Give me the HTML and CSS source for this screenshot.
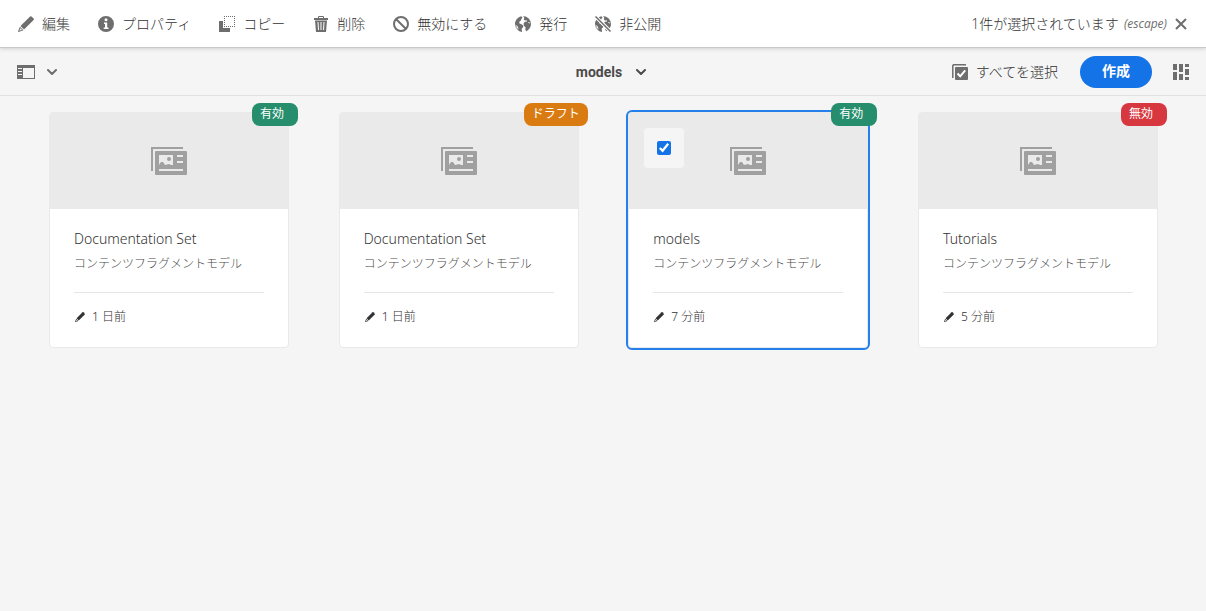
FILE: index.html
```html
<!DOCTYPE html>
<html lang="ja">
<head>
<meta charset="utf-8">
<meta name="viewport" content="width=device-width, initial-scale=1">
<title>models</title>
<link rel="stylesheet" href="styles.css">
</head>
<body>
<svg class="sprite" aria-hidden="true">
  <symbol id="edit" viewBox="0 0 16 16"><path fill="currentColor" d="M12.1.5a1 1 0 0 1 1.4 0l2.1 2.1a1 1 0 0 1 0 1.4L6 13.6 2.5 10.1z"/><path fill="currentColor" fill-rule="evenodd" d="M1.9 10.7 5.4 14.2.5 16 0 15.5zM2.5 12.2 1.3 14.8 3.9 13.7z"/></symbol>
  <symbol id="info" viewBox="0 0 16 16"><path fill="currentColor" fill-rule="evenodd" d="M8 0a8 8 0 1 0 0 16A8 8 0 0 0 8 0zm0 2.3a1.500 1.500 0 1 1 0 3 1.500 1.500 0 0 1 0-3zM6 6.500h3.200v5h1.300V13H5.700v-1.500H7V8H6z"/></symbol>
  <symbol id="copy" viewBox="0 0 16 16"><path fill="currentColor" d="M0 5h4v7h7v4H0z"/><path fill="none" stroke="currentColor" stroke-dasharray="1 1" d="M5 .5h11M5 10.500h11M5.500 0v11M15.500 0v11"/></symbol>
  <symbol id="trash" viewBox="0 0 16 16"><path fill="none" stroke="currentColor" d="M5.500 2V.5h5V2"/><path fill="currentColor" fill-rule="evenodd" d="M1 2h14v2H1zM2 4.500h12L13 16H3zM4.500 6l.5 8h1l-.5-8zM7.500 6v8h1V6zM10.500 6l-.5 8h1l.5-8z"/></symbol>
  <symbol id="ban" viewBox="0 0 16 16"><path fill="none" stroke="currentColor" stroke-width="2" d="M8 1a7 7 0 1 0 0 14A7 7 0 0 0 8 1zM3 3l10 10"/></symbol>
  <symbol id="globe" viewBox="0 0 16 16"><path fill="currentColor" d="M.4 5.600C1.300 2.800 3.500.9 6.300.2L7.600 1.700 6.200 3 6 4.500 4.500 5.500 4.200 7.200 6 8 8.300 9.500 8 11.400 6.700 12.600 7 15.900A8 8 0 0 1 0 8.500V7zM8.200 0A8 8 0 0 1 16 8c0 3.200-1.900 6-4.700 7.300L10.200 13.500 10.700 11.500 8.800 9.500 8.600 7.300 10 5.800 12 5.600 11.800 4.200 10 4.600 8.800 3.400 9.300 1.800z"/><path fill="#fff" d="m0 8.500 1.800 1 1 1.300.7 2.200-1 .7L0 11zM13 6.500l.8-.5 1.500 1-.7.6z"/><path fill="none" stroke="currentColor" stroke-width=".8" d="M.5 8a7.500 7.500 0 0 0 3 6"/></symbol>
  <symbol id="unpublish" viewBox="0 0 16 16"><use href="#globe"/><path stroke="#fff" stroke-width="3.500" d="m0 0 16 16"/><path stroke="currentColor" stroke-width="1.500" d="m.5.5 15 15"/></symbol>
  <symbol id="close" viewBox="0 0 12 12"><path fill="none" stroke="currentColor" stroke-width="2" d="m1 1 10 10M11 1 1 11"/></symbol>
  <symbol id="rail" viewBox="0 0 18 14"><path fill="currentColor" fill-rule="evenodd" d="M0 0h18v14H0zM6 3v10h11V3zM1 3v1h4V3zM1 6v1h4V6zM1 9v1h4V9z"/></symbol>
  <symbol id="chevron" viewBox="0 0 10 6"><path fill="none" stroke="currentColor" stroke-width="2" stroke-linecap="round" stroke-linejoin="round" d="m1 1 4 4 4-4"/></symbol>
  <symbol id="select-all" viewBox="0 0 16 16"><path fill="none" stroke="currentColor" stroke-width="1.500" d="M.8 14V1.500L1.500.8H14"/><path fill="currentColor" d="M4 3h11a1 1 0 0 1 1 1v11a1 1 0 0 1-1 1H4a1 1 0 0 1-1-1V4a1 1 0 0 1 1-1z"/><path fill="none" stroke="#fff" stroke-width="2" d="m5.500 9.500 2.700 2.800 5-6"/></symbol>
  <symbol id="cards" viewBox="0 0 16 16"><path fill="currentColor" d="M0 0h4v6H0zM0 8h4v8H0zM6 0h4v8H6zM6 10h4v6H6zM12 0h4v3h-4zM12 5h4v6h-4zM12 13h4v3h-4z"/></symbol>
  <symbol id="fragment" viewBox="0 0 36 28"><path fill="none" stroke="currentColor" stroke-width="2" d="M1 24V1h31"/><path fill="currentColor" fill-rule="evenodd" d="M5 4h30a1 1 0 0 1 1 1v22a1 1 0 0 1-1 1H5a1 1 0 0 1-1-1V5a1 1 0 0 1 1-1zM8 8v10l2-3h2l2 3 4-1 2 1h2V8zM26 8v2h6V8zM26 14v2h6v-2zM8 22v2h24v-2z"/><circle cx="18" cy="12" r="2" fill="currentColor"/></symbol>
</svg>

<header class="action-bar">
  <div class="actions">
    <button class="action" type="button"><svg class="icon"><use href="#edit"/></svg>編集</button>
    <button class="action" type="button"><svg class="icon"><use href="#info"/></svg>プロパティ</button>
    <button class="action" type="button"><svg class="icon"><use href="#copy"/></svg>コピー</button>
    <button class="action" type="button"><svg class="icon"><use href="#trash"/></svg>削除</button>
    <button class="action" type="button"><svg class="icon"><use href="#ban"/></svg>無効にする</button>
    <button class="action" type="button"><svg class="icon"><use href="#globe"/></svg>発行</button>
    <button class="action" type="button"><svg class="icon"><use href="#unpublish"/></svg>非公開</button>
  </div>
  <button class="selection" type="button"><span>1件が選択されています</span><span class="shortcut">(escape)</span><svg class="close-icon"><use href="#close"/></svg></button>
</header>

<nav class="toolbar">
  <div class="side">
    <button class="rail-button" type="button" aria-label="パネル"><svg class="rail-icon"><use href="#rail"/></svg><svg class="chevron"><use href="#chevron"/></svg></button>
  </div>
  <button class="crumb" type="button">models<svg class="chevron"><use href="#chevron"/></svg></button>
  <div class="side side-end">
    <button class="action" type="button"><svg class="icon"><use href="#select-all"/></svg>すべてを選択</button>
    <button class="create" type="button">作成</button>
    <button class="view-button" type="button" aria-label="カード表示"><svg class="icon"><use href="#cards"/></svg></button>
  </div>
</nav>

<main class="card-grid">
  <article class="card">
    <span class="badge badge-enabled">有効</span>
    <div class="preview"><svg class="fragment-icon"><use href="#fragment"/></svg></div>
    <div class="details">
      <h2 class="title">Documentation Set</h2>
      <p class="type">コンテンツフラグメントモデル</p>
      <p class="modified"><svg class="small-icon"><use href="#edit"/></svg>1 日前</p>
    </div>
  </article>
  <article class="card">
    <span class="badge badge-draft">ドラフト</span>
    <div class="preview"><svg class="fragment-icon"><use href="#fragment"/></svg></div>
    <div class="details">
      <h2 class="title">Documentation Set</h2>
      <p class="type">コンテンツフラグメントモデル</p>
      <p class="modified"><svg class="small-icon"><use href="#edit"/></svg>1 日前</p>
    </div>
  </article>
  <article class="card card-selected">
    <span class="badge badge-enabled">有効</span>
    <label class="picker"><input class="check" type="checkbox" aria-label="models" checked></label>
    <div class="preview"><svg class="fragment-icon"><use href="#fragment"/></svg></div>
    <div class="details">
      <h2 class="title">models</h2>
      <p class="type">コンテンツフラグメントモデル</p>
      <p class="modified"><svg class="small-icon"><use href="#edit"/></svg>7 分前</p>
    </div>
  </article>
  <article class="card">
    <span class="badge badge-disabled">無効</span>
    <div class="preview"><svg class="fragment-icon"><use href="#fragment"/></svg></div>
    <div class="details">
      <h2 class="title">Tutorials</h2>
      <p class="type">コンテンツフラグメントモデル</p>
      <p class="modified"><svg class="small-icon"><use href="#edit"/></svg>5 分前</p>
    </div>
  </article>
</main>
</body>
</html>
```
FILE: styles.css
```css
* {
  box-sizing: border-box;
}

body {
  margin: 0;
  min-height: 100vh;
  background: #f5f5f5;
  color: #323232;
  font: 300 14px/20px "Noto Sans", "Noto Sans CJK JP", sans-serif;
}

button {
  margin: 0;
  padding: 0;
  border: 0;
  background: none;
  color: inherit;
  font: inherit;
  white-space: nowrap;
}

svg {
  display: block;
  flex: none;
}

.sprite {
  position: absolute;
  width: 0;
  height: 0;
}

.icon {
  width: 16px;
  height: 16px;
  color: #6e6e6e;
}

.action-bar {
  position: relative;
  display: flex;
  justify-content: space-between;
  align-items: center;
  height: 48px;
  padding: 0 19px 0 18px;
  background: #fff;
  border-bottom: 1px solid #c8c8c8;
  box-shadow: 0 1px 4px rgba(0, 0, 0, 0.15);
}

.actions {
  display: flex;
  gap: 28px;
}

.action {
  display: flex;
  align-items: center;
  gap: 8px;
  font-family: "Open Sans", "Noto Sans CJK JP", sans-serif;
}

.selection {
  display: flex;
  align-items: center;
  gap: 5px;
  font-family: "Open Sans", "Noto Sans CJK JP", sans-serif;
}

.shortcut {
  color: #6e6e6e;
  font-size: 12px;
  font-style: italic;
  font-weight: 400;
}

.close-icon {
  width: 12px;
  height: 12px;
  margin-left: 3px;
  color: #6e6e6e;
}

.toolbar {
  display: flex;
  align-items: center;
  height: 48px;
  padding: 0 17px;
  border-bottom: 1px solid #e1e1e1;
}

.side {
  display: flex;
  align-items: center;
  flex: 1;
}

.side-end {
  justify-content: flex-end;
}

.rail-button {
  display: flex;
  align-items: center;
  gap: 12px;
  color: #6e6e6e;
}

.rail-icon {
  width: 18px;
  height: 14px;
}

.chevron {
  width: 10px;
  height: 6px;
}

.crumb {
  display: flex;
  align-items: center;
  gap: 14px;
  margin-left: 16px;
  color: #4b4b4b;
  font-family: Roboto, sans-serif;
  font-weight: 700;
}

.create {
  height: 32px;
  margin: 0 21px 0 22px;
  padding: 0 22px 2px;
  border-radius: 16px;
  background: #1473e6;
  color: #fff;
  font-family: "Open Sans", "Noto Sans CJK JP", sans-serif;
  font-weight: 700;
}

.card-grid {
  display: grid;
  grid-template-columns: repeat(auto-fit, 240px);
  justify-content: space-between;
  gap: 48px;
  padding: 16px 48px 48px 49px;
}

.card {
  position: relative;
  border: 1px solid #e9e9e9;
  border-radius: 4px;
  background: #fff;
}

.card-selected {
  outline: 2px solid #2680eb;
}

.badge {
  position: absolute;
  top: -10px;
  right: -10px;
  padding: 0 14px 3px 8px;
  border-radius: 8px;
  color: #fff;
  font: 400 12px/20px "Noto Sans CJK JP", sans-serif;
}

.badge-enabled {
  background: #268e6c;
}

.badge-draft {
  padding: 0 8px 3px;
  background: #da7b11;
}

.badge-disabled {
  background: #d7373f;
}

.picker {
  position: absolute;
  top: 15px;
  left: 15px;
  display: grid;
  place-items: center;
  width: 40px;
  height: 40px;
  border-radius: 4px;
  background: #f5f5f5;
}

.check {
  width: 14px;
  height: 14px;
  margin: 0;
  accent-color: #1473e6;
}

.preview {
  display: grid;
  place-items: center;
  height: 96px;
  background: #eaeaea;
}

.fragment-icon {
  width: 36px;
  height: 28px;
  color: #a0a0a0;
}

.details {
  padding: 20px 24px;
}

.title {
  margin: 0;
  font: 300 14px/20px "Noto Sans", sans-serif;
}

.type {
  margin: 4px 0 0;
  color: #4b4b4b;
  font: 300 12px/20px "Noto Sans CJK JP", sans-serif;
}

.modified {
  display: flex;
  align-items: center;
  gap: 7px;
  margin: 19px 0 0;
  padding-top: 14px;
  border-top: 1px solid #e6e6e6;
  font: 300 12px/20px "Noto Sans", "Noto Sans CJK JP", sans-serif;
}

.small-icon {
  width: 10px;
  height: 10px;
  margin-left: 1px;
}
```
